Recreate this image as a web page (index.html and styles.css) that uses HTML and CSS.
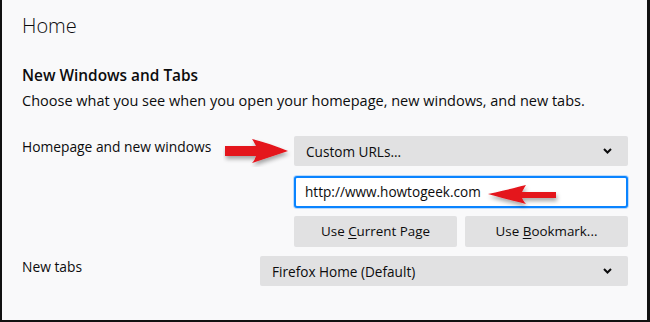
FILE: index.html
```html
<!DOCTYPE html>
<html lang="en">
<head>
    <meta charset="UTF-8">
    <title>Home - Options</title>
    <link rel="stylesheet" href="styles.css">
</head>
<body>
    <div class="page">
        <h1 class="title">Home</h1>

        <h2 class="section-title">New Windows and Tabs</h2>
        <p class="description">Choose what you see when you open your homepage, new windows, and new tabs.</p>

        <div class="row">
            <span class="label">Homepage and new windows</span>
            <div class="controls controls-home">
                <div class="select">
                    <span>Custom URLs...</span>
                    <svg class="chevron" width="9" height="6" viewBox="0 0 9 6"><path d="M1 1l3.5 3.5L8 1" fill="none" stroke="#0c0c0d" stroke-width="2"/></svg>
                </div>
                <div class="url-input">http://www.howtogeek.com</div>
                <div class="buttons">
                    <div class="button">Use <u>C</u>urrent Page</div>
                    <div class="button">Use <u>B</u>ookmark...</div>
                </div>
            </div>
        </div>

        <div class="row row-tabs">
            <span class="label">New tabs</span>
            <div class="controls controls-tabs">
                <div class="select">
                    <span>Firefox Home (Default)</span>
                    <svg class="chevron" width="9" height="6" viewBox="0 0 9 6"><path d="M1 1l3.5 3.5L8 1" fill="none" stroke="#0c0c0d" stroke-width="2"/></svg>
                </div>
            </div>
        </div>

        <!-- annotation arrows -->
        <svg class="arrow arrow-right" width="72" height="30" viewBox="0 0 72 30">
            <defs>
                <filter id="shadow1" x="-20%" y="-30%" width="140%" height="180%">
                    <feDropShadow dx="1" dy="3" stdDeviation="2" flood-color="#000" flood-opacity="0.35"/>
                </filter>
            </defs>
            <path d="M2 9h31c-1-2-2-4-4-7c12 3 24 7 36 12c-12 4-24 8-36 12c2-2 3-4 4-7H2z" fill="#e4121a" filter="url(#shadow1)"/>
        </svg>
        <svg class="arrow arrow-left" width="78" height="30" viewBox="0 0 78 30">
            <defs>
                <filter id="shadow2" x="-20%" y="-30%" width="140%" height="180%">
                    <feDropShadow dx="1" dy="3" stdDeviation="2" flood-color="#000" flood-opacity="0.35"/>
                </filter>
            </defs>
            <path d="M72 11H38c1-2 2-4 4-7C30 7 18 10 4 13c14 4 26 7 38 10c-2-2-3-4-4-6h34z" fill="#e4121a" filter="url(#shadow2)"/>
        </svg>
    </div>
</body>
</html>
```

FILE: styles.css
```css
html, body {
    margin: 0;
    padding: 0;
}
body {
    font-family: "Open Sans", "Noto Sans", sans-serif;
    color: #0c0c0d;
    background-color: #f9f9fa;
}
.page {
    position: relative;
    box-sizing: border-box;
    width: 650px;
    height: 322px;
    padding: 0 19px 0 20px;
    border-left: 2px solid #111;
    border-right: 3px solid #111;
    border-bottom: 2px solid #111;
    overflow: hidden;
}
.title {
    margin: 0;
    padding-top: 11px;
    font-size: 20px;
    font-weight: 300;
    line-height: 30px;
}
.section-title {
    margin: 25px 0 0 0;
    font-size: 15.4px;
    font-weight: 600;
    line-height: 20px;
}
.description {
    margin: 5px 0 0 0;
    font-size: 14.5px;
    line-height: 20px;
}
.row {
    display: flex;
    align-items: flex-start;
    justify-content: space-between;
    margin-top: 25px;
}
.row-tabs {
    margin-top: 9px;
}
.label {
    font-size: 13.8px;
    line-height: 20px;
    padding-top: 1px;
}
.controls {
    display: flex;
    flex-direction: column;
}
.controls-home {
    width: 334px;
}
.controls-tabs {
    width: 368px;
}
.select {
    display: flex;
    align-items: center;
    justify-content: space-between;
    height: 30px;
    padding: 0 16px 0 12px;
    background: #e1e1e2;
    border-radius: 2px;
    font-size: 13.6px;
}
.chevron {
    display: block;
}
.url-input {
    box-sizing: border-box;
    height: 32px;
    margin-top: 10px;
    padding: 0 9px;
    border: 2px solid #0a84ff;
    border-radius: 3px;
    background: #fff;
    font-size: 13.6px;
    line-height: 28px;
    box-shadow: 0 0 0 1px rgba(10, 132, 255, 0.25);
}
.buttons {
    display: flex;
    gap: 8px;
    margin-top: 8px;
}
.button {
    flex: 1;
    height: 31px;
    background: #e1e1e2;
    border-radius: 2px;
    font-size: 13.4px;
    line-height: 31px;
    text-align: center;
}
.button u {
    text-decoration-thickness: 1px;
    text-underline-offset: 2px;
}
.arrow {
    position: absolute;
    display: block;
}
.arrow-right {
    left: 221px;
    top: 137px;
}
.arrow-left {
    left: 482px;
    top: 181px;
}
```
